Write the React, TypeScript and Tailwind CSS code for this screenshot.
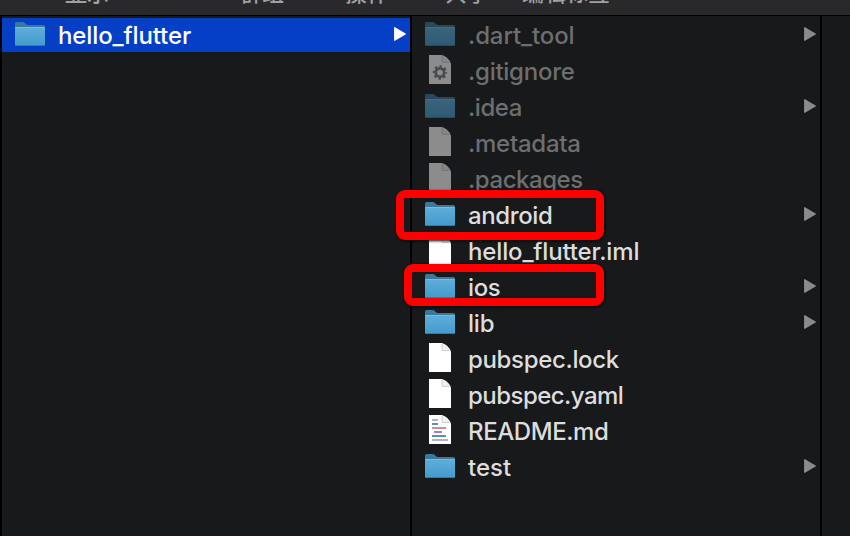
import React from "react";

type Kind = "folder" | "file" | "gear" | "code";
type Entry = { name: string; kind: Kind; dim?: boolean; tracking: string };

const entries: Entry[] = [
  { name: ".dart_tool", kind: "folder", dim: true, tracking: "tracking-[-0.12px]" },
  { name: ".gitignore", kind: "gear", dim: true, tracking: "tracking-[-0.26px]" },
  { name: ".idea", kind: "folder", dim: true, tracking: "tracking-[-0.45px]" },
  { name: ".metadata", kind: "file", dim: true, tracking: "tracking-[-0.26px]" },
  { name: ".packages", kind: "file", dim: true, tracking: "tracking-[-0.45px]" },
  { name: "android", kind: "folder", tracking: "tracking-[-0.38px]" },
  { name: "hello_flutter.iml", kind: "file", tracking: "tracking-[-0.15px]" },
  { name: "ios", kind: "folder", tracking: "tracking-[-0.4px]" },
  { name: "lib", kind: "folder", tracking: "tracking-[-0.2px]" },
  { name: "pubspec.lock", kind: "file", tracking: "tracking-[-0.34px]" },
  { name: "pubspec.yaml", kind: "file", tracking: "tracking-[-0.54px]" },
  { name: "README.md", kind: "code", tracking: "tracking-[-0.42px]" },
  { name: "test", kind: "folder", tracking: "tracking-[0px]" },
];

function Folder() {
  return (
    <svg width="30" height="24" viewBox="0 0 30 24">
      <defs>
        <linearGradient id="front" x1="0" y1="0" x2="0" y2="1">
          <stop offset="0" stopColor="#5eaedb" />
          <stop offset="1" stopColor="#439bcb" />
        </linearGradient>
      </defs>
      <path d="M0 1.5Q0 0 1.5 0H8Q9 0 10 1.2Q11.3 3 13 3H28.500Q30 3 30 4.500V22H0Z" fill="#38799d" />
      <path d="M0 5.500Q0 5 1 5H29Q30 5 30 5.500V22.500Q30 24 28.500 24H1.500Q0 24 0 22.500Z" fill="url(#front)" />
      <path d="M.5 5.500H29.500" stroke="#76bce2" strokeWidth="1" />
      <path d="M.7 23.500H29.300" stroke="#357da5" strokeWidth="1" />
    </svg>
  );
}

function Doc({ kind }: { kind: Kind }) {
  return (
    <svg width="30" height="30" viewBox="0 0 30 30">
      <path d="M4 0H16.500C21 1 25 5 26 9V29H4Z" fill="#fff" />
      <path d="M17 .8V6.500Q17 7.500 18 7.500H25.200C23.500 4.500 20.500 1.800 17 .8Z" fill="#f0f0f0" />
      <path d="M17 1V6.500Q17 7.500 18 7.500H24" fill="none" stroke="#bdbdbd" strokeWidth=".7" />
      {kind === "gear" && (
        <g stroke="#777d82" fill="none">
          <circle cx="15" cy="17.500" r="4.200" strokeWidth="2.700" />
          <circle cx="15" cy="17.500" r="6.200" strokeWidth="2" strokeDasharray="2.400 2.469" strokeDashoffset="1.200" />
        </g>
      )}
      {kind === "code" && (
        <g strokeWidth="1.800">
          <path d="M7 5H13" stroke="#a9adb0" />
          <path d="M7 9H13" stroke="#438ca0" />
          <path d="M7 13H21" stroke="#c98583" />
          <path d="M9 17H17" stroke="#a366d6" />
          <path d="M7 21H21" stroke="#438ca0" />
          <path d="M7 25H23" stroke="#a9adb0" />
        </g>
      )}
    </svg>
  );
}

function Arrow({ className }: { className: string }) {
  return (
    <svg width="12" height="14" viewBox="0 0 12 14" className={className}>
      <path d="M.7 .7L11.300 7L.7 13.300Z" fill="currentColor" stroke="currentColor" strokeWidth="1.200" strokeLinejoin="round" />
    </svg>
  );
}

function Row({ entry }: { entry: Entry }) {
  const isFolder = entry.kind === "folder";
  return (
    <div className="flex h-9 items-center pl-[13px] pr-1">
      <div className={`flex w-[30px] shrink-0 pb-0.5 ${entry.dim ? "opacity-50" : ""}`}>
        {isFolder ? <Folder /> : <Doc kind={entry.kind} />}
      </div>
      <span className={`ml-[13px] grow whitespace-nowrap pt-0.5 ${entry.tracking} ${entry.dim ? "text-[#6d6e70]" : "text-[#dddddd]"}`}>{entry.name}</span>
      {isFolder && <Arrow className="mb-0.5 text-[#8b8b8d]" />}
    </div>
  );
}

export default function App() {
  return (
    <div className="relative flex h-[536px] w-[850px] flex-col overflow-hidden bg-black font-['Inter','Noto_Sans_CJK_SC',sans-serif] text-[24px] font-[450] leading-9">
      <div className="flex h-[15px] shrink-0 items-end overflow-hidden bg-[#29292c] pb-[13px] font-['Noto_Sans_CJK_SC',sans-serif] text-[22px] leading-[22px] text-[#a0a0a2]">
        <span className="ml-[65px] w-[175px]">显示</span>
        <span className="w-[105px]">群组</span>
        <span className="w-[100px]">操作</span>
        <span className="w-[77px]">共享</span>
        <span>编辑标签</span>
      </div>
      <div className="mt-px flex grow gap-0.5 pl-0.5">
        <div className="w-[408px] bg-[#18191b] pt-0.5">
          <div className="flex h-[34px] items-center bg-[#043fc6] pl-[13px] pr-1">
            <div className="flex w-[30px] pb-0.5"><Folder /></div>
            <span className="ml-[13px] grow pt-0.5 tracking-[-0.12px] text-white">hello_flutter</span>
            <Arrow className="mb-0.5 text-white" />
          </div>
        </div>
        <div className="w-[408px] bg-[#18191b] pt-px">
          {entries.map((entry) => <Row key={entry.name} entry={entry} />)}
        </div>
        <div className="grow bg-[#18191b]" />
      </div>
      <div className="absolute left-[396px] top-[190px] h-[50px] w-[208px] rounded-[9px] border-8 border-[#ff0000] shadow-[1px_1px_3px_#000]" />
      <div className="absolute left-[404px] top-[264px] h-[42px] w-[200px] rounded-[9px] border-8 border-[#ff0000] shadow-[1px_1px_3px_#000]" />
    </div>
  );
}
